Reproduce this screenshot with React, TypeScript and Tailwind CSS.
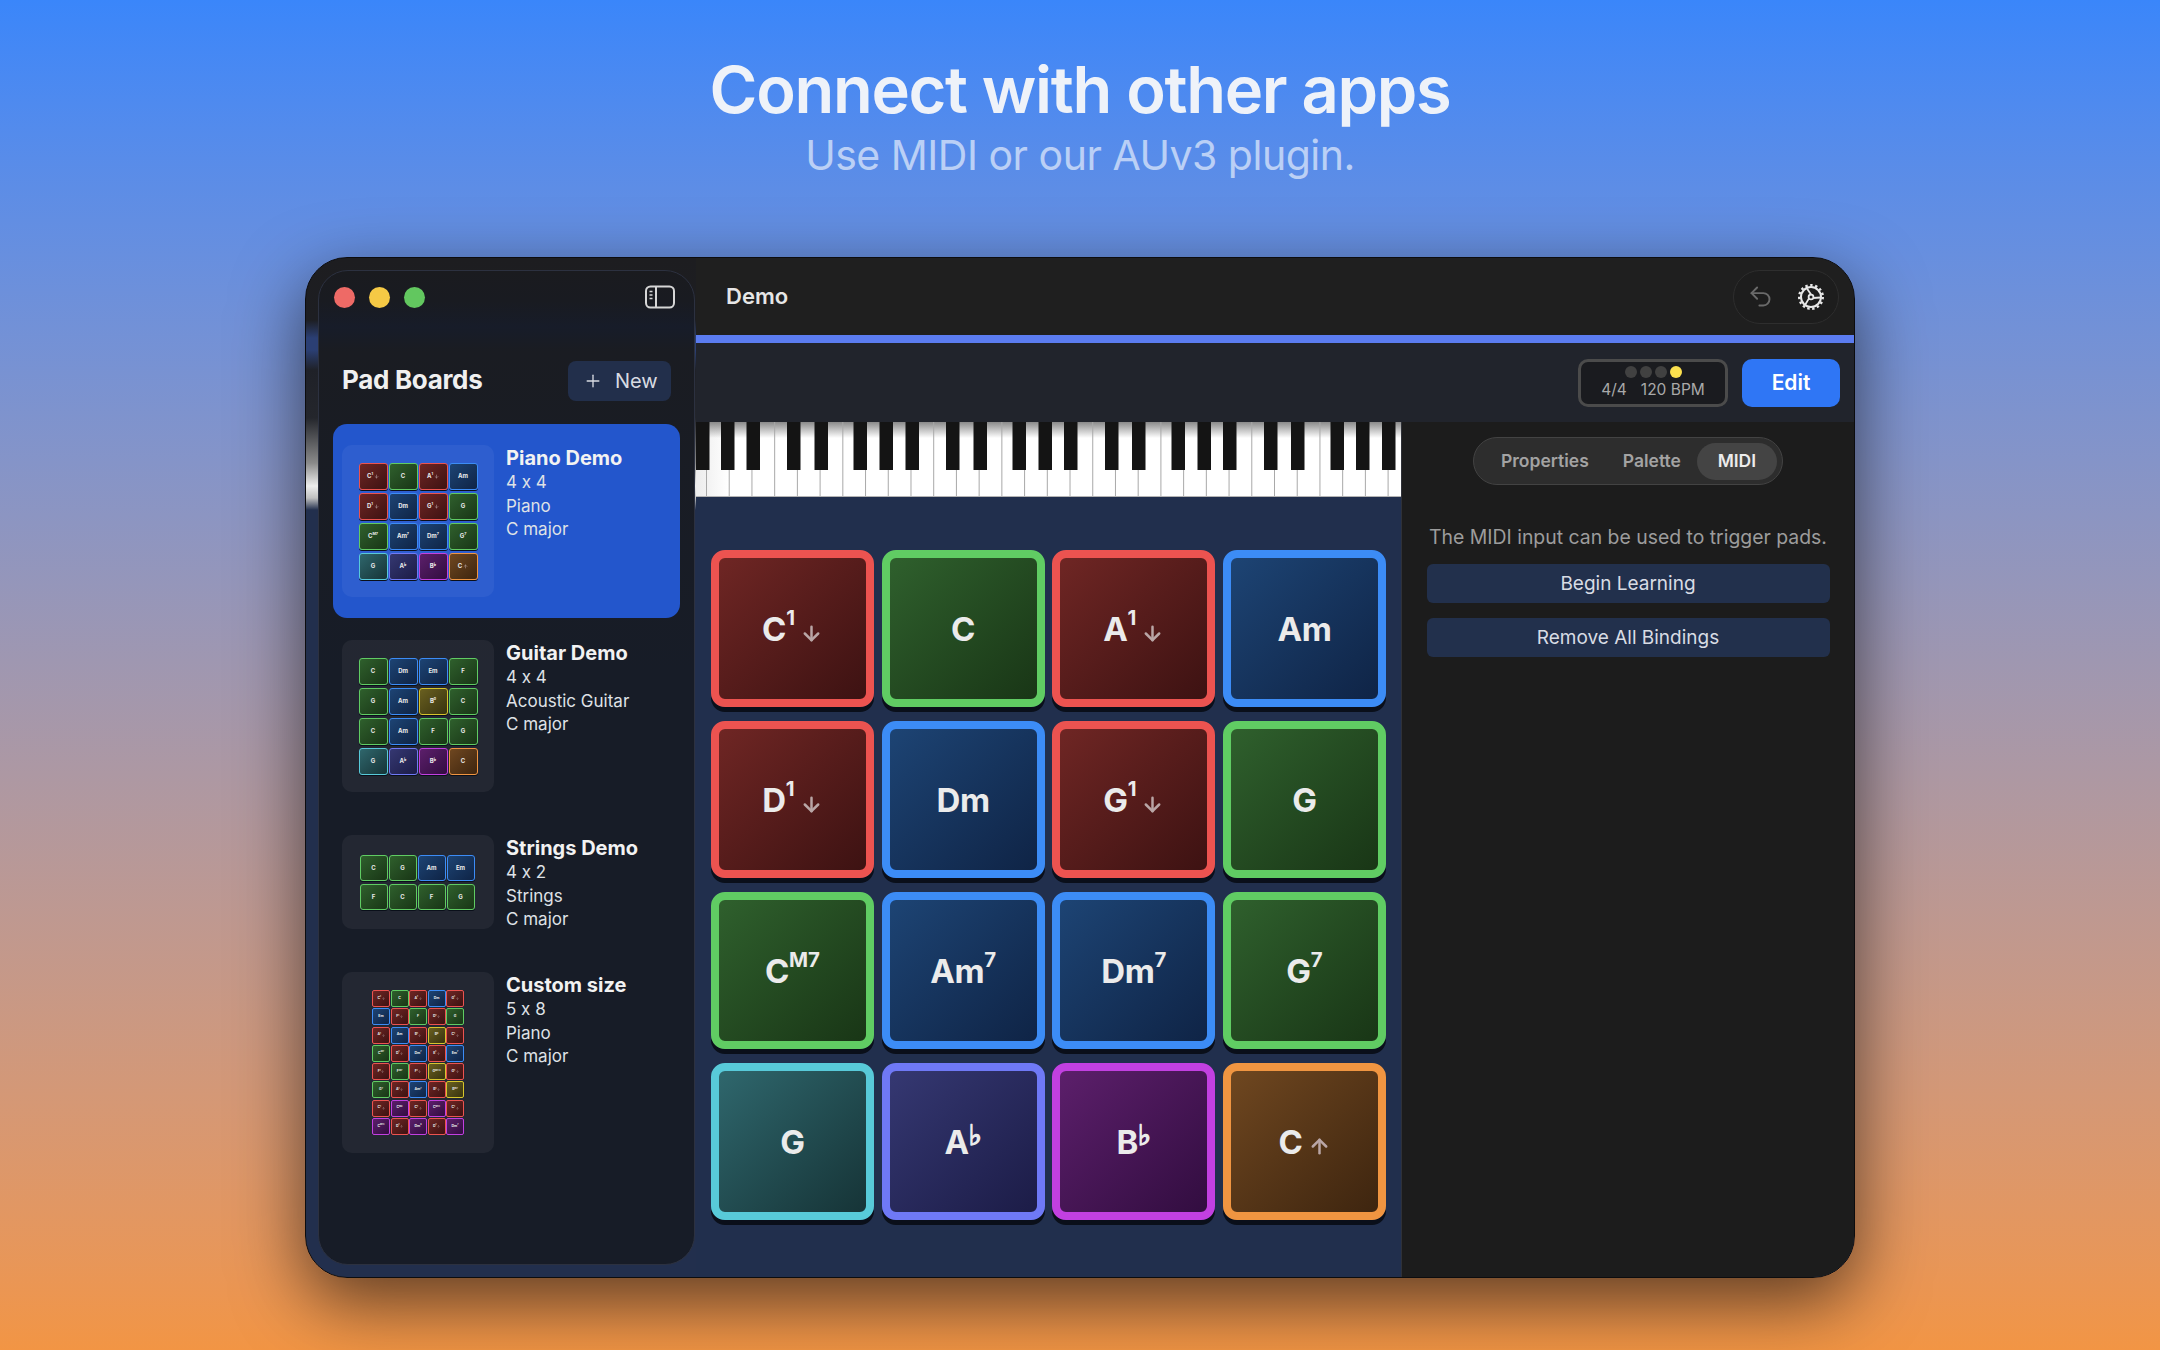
import React from "react";
import { ArrowDown, ArrowUp, Plus, Undo2 } from "lucide-react";

type C = "r" | "g" | "b" | "c" | "i" | "m" | "o" | "y";
type Size = "lg" | "md" | "sm";
type PadData = { c: C; t: string; s?: string; fl?: boolean; a?: "d" | "u" };

const colors: Record<C, string> = {
  r: "border-[#ec5350] bg-gradient-to-br from-[#6f2624] to-[#3d1212]",
  g: "border-[#60cc63] bg-gradient-to-br from-[#2f602d] to-[#193616]",
  b: "border-[#3c8cf6] bg-gradient-to-br from-[#1d4474] to-[#0f2446]",
  c: "border-[#58cad9] bg-gradient-to-br from-[#2f676d] to-[#163437]",
  i: "border-[#6f79f6] bg-gradient-to-br from-[#353872] to-[#1c1c47]",
  m: "border-[#c240e1] bg-gradient-to-br from-[#5c1f6b] to-[#320d40]",
  o: "border-[#f09541] bg-gradient-to-br from-[#6f4720] to-[#3e250f]",
  y: "border-[#d6c52c] bg-gradient-to-br from-[#6a6020] to-[#38330f]",
};

const sizes: Record<Size, string> = {
  lg: "border-[8px] rounded-[14px] text-[33px] font-bold shadow-[0_5px_0_#0a0f1a] pt-[2px]",
  md: "border-[1.5px] rounded-[3px] text-[6px] font-bold shadow-[0_1px_0_#0a0f1a]",
  sm: "border-[1px] rounded-[2px] text-[3.5px] font-bold",
};

const arrowSize: Record<Size, string> = {
  lg: "w-[23px] h-[23px] ml-[5px] mt-[7px]",
  md: "w-[5px] h-[5px] ml-[1px]",
  sm: "w-[3px] h-[3px] ml-[0.5px]",
};

function Pad({ p, size }: { p: PadData; size: Size }) {
  const Arrow = p.a === "u" ? ArrowUp : ArrowDown;
  return (
    <div className={`flex items-center justify-center leading-none text-[#ebebeb] ${sizes[size]} ${colors[p.c]}`}>
      <span className="tracking-[-0.01em]">{p.t}</span>
      {p.s && <span className="text-[0.62em] self-center -translate-y-[0.55em]">{p.s}</span>}
      {p.fl && <span className="text-[0.85em] -translate-y-[0.2em] font-bold font-['DejaVu_Sans',sans-serif] [-webkit-text-stroke:0.05em_#ebebeb]">♭</span>}
      {p.a && <Arrow strokeWidth={2.6} className={`text-[#b9a6a6] ${arrowSize[size]}`} />}
    </div>
  );
}

const main: PadData[] = [
  { c: "r", t: "C", s: "1", a: "d" }, { c: "g", t: "C" }, { c: "r", t: "A", s: "1", a: "d" }, { c: "b", t: "Am" },
  { c: "r", t: "D", s: "1", a: "d" }, { c: "b", t: "Dm" }, { c: "r", t: "G", s: "1", a: "d" }, { c: "g", t: "G" },
  { c: "g", t: "C", s: "M7" }, { c: "b", t: "Am", s: "7" }, { c: "b", t: "Dm", s: "7" }, { c: "g", t: "G", s: "7" },
  { c: "c", t: "G" }, { c: "i", t: "A", fl: true }, { c: "m", t: "B", fl: true }, { c: "o", t: "C", a: "u" },
];

const guitar: PadData[] = [
  { c: "g", t: "C" }, { c: "b", t: "Dm" }, { c: "b", t: "Em" }, { c: "g", t: "F" },
  { c: "g", t: "G" }, { c: "b", t: "Am" }, { c: "y", t: "B", s: "o" }, { c: "g", t: "C" },
  { c: "g", t: "C" }, { c: "b", t: "Am" }, { c: "g", t: "F" }, { c: "g", t: "G" },
  { c: "c", t: "G" }, { c: "i", t: "A", fl: true }, { c: "m", t: "B", fl: true }, { c: "o", t: "C" },
];

const strings: PadData[] = [
  { c: "g", t: "C" }, { c: "g", t: "G" }, { c: "b", t: "Am" }, { c: "b", t: "Em" },
  { c: "g", t: "F" }, { c: "g", t: "C" }, { c: "g", t: "F" }, { c: "g", t: "G" },
];

const custom: PadData[] = [
  { c: "r", t: "C", s: "1", a: "d" }, { c: "g", t: "C" }, { c: "r", t: "A", s: "1", a: "d" }, { c: "b", t: "Dm" }, { c: "r", t: "G", s: "1", a: "d" },
  { c: "b", t: "Em" }, { c: "r", t: "F", s: "1", a: "d" }, { c: "g", t: "F" }, { c: "r", t: "D", s: "1", a: "d" }, { c: "g", t: "G" },
  { c: "r", t: "A", s: "1", a: "d" }, { c: "b", t: "Am" }, { c: "r", t: "B", s: "1", a: "d" }, { c: "y", t: "B", s: "o" }, { c: "r", t: "C", s: "1", a: "d" },
  { c: "g", t: "C", s: "M7" }, { c: "r", t: "D", s: "1", a: "d" }, { c: "b", t: "Dm", s: "7" }, { c: "r", t: "E", s: "1", a: "d" }, { c: "b", t: "Em", s: "7" },
  { c: "r", t: "F", s: "1", a: "d" }, { c: "g", t: "F", s: "M7" }, { c: "r", t: "F", s: "1", a: "d" }, { c: "y", t: "G", s: "M7/9" }, { c: "r", t: "G", s: "1", a: "d" },
  { c: "g", t: "G", s: "7" }, { c: "r", t: "A", s: "1", a: "d" }, { c: "b", t: "Am", s: "7" }, { c: "r", t: "B", s: "1", a: "d" }, { c: "y", t: "B", s: "m7" },
  { c: "r", t: "C", s: "1", a: "u" }, { c: "m", t: "C", s: "M9" }, { c: "r", t: "C", s: "1", a: "u" }, { c: "m", t: "C", s: "M13" }, { c: "r", t: "C", s: "1", a: "u" },
  { c: "m", t: "C", s: "M13" }, { c: "r", t: "D", s: "1", a: "u" }, { c: "m", t: "Dm", s: "9" }, { c: "r", t: "D", s: "1", a: "u" }, { c: "m", t: "Dm", s: "7" },
];

const blackKeys = [0, 25, 50.5, 91, 118.5, 157.5, 183.5, 209.5, 250, 277.5, 316.5, 342.5, 368, 409, 436, 475.5, 501.5, 527, 568, 595, 634.5, 660, 686];
const whiteLines = Array.from({ length: 31 }, (_, i) => 10 + i * 22.72);

function Piano() {
  return (
    <svg width="705" height="75" viewBox="0 0 705 75" className="block shrink-0">
      <defs>
        <linearGradient id="shade" x1="0" y1="0" x2="0" y2="1">
          <stop offset="0" stopColor="#8a8a8a" />
          <stop offset="1" stopColor="#8a8a8a" stopOpacity="0" />
        </linearGradient>
        <linearGradient id="press" x1="0" y1="0" x2="1" y2="0">
          <stop offset="0" stopColor="#ececec" />
          <stop offset="1" stopColor="#ffffff" />
        </linearGradient>
      </defs>
      <rect width="705" height="75" fill="#ffffff" />
      <rect x="0" width="33" height="75" fill="url(#press)" />
      <rect width="705" height="16" fill="url(#shade)" />
      {whiteLines.map((x) => (
        <rect key={x} x={x} y="0" width="1" height="75" fill="#a9a9a9" />
      ))}
      <rect x="0" y="74" width="705" height="1" fill="#b4b4b4" />
      {blackKeys.map((x) => (
        <rect key={x} x={x} y="0" width="13.5" height="48" fill="#141414" />
      ))}
    </svg>
  );
}

function SidebarIcon() {
  return (
    <svg width="30" height="24" viewBox="0 0 30 24" fill="none" stroke="#d6d6d6" strokeWidth="2">
      <rect x="1" y="1.5" width="28" height="21" rx="4.5" />
      <path d="M11 1.5v21" />
      <path d="M4.5 6.5h3M4.5 10h3M4.5 13.5h3" strokeWidth="1.7" />
    </svg>
  );
}

function Gear() {
  return (
    <svg width="28" height="28" viewBox="0 0 28 28" fill="none" stroke="#e8e8e8">
      <circle cx="14" cy="14" r="10" strokeWidth="2" />
      <circle cx="14" cy="14" r="11.8" strokeWidth="2.4" strokeDasharray="2.4 2.55" />
      <circle cx="14" cy="14" r="2.4" strokeWidth="1.8" />
      <path d="M14 11.6 10 5.5M16.1 15 23.5 14.5M12 15.4 8 22" strokeWidth="1.8" />
    </svg>
  );
}

function Thumb({ pads, kind }: { pads: PadData[]; kind: "four" | "two" | "five" }) {
  const box = { four: "h-[152px]", two: "h-[94px] pr-[2px]", five: "h-[181px]" }[kind];
  const grid = {
    four: "grid-cols-[repeat(4,29px)] auto-rows-[27px] gap-x-px gap-y-[3px]",
    two: "grid-cols-[repeat(4,28px)] auto-rows-[26px] gap-x-px gap-y-[3px]",
    five: "grid-cols-[repeat(5,18px)] auto-rows-[17px] gap-x-[0.5px] gap-y-[1.3px]",
  }[kind];
  return (
    <div className={`w-[152px] shrink-0 rounded-[10px] bg-white/[0.05] flex items-center justify-center ${box}`}>
      <div className={`grid ${grid}`}>
        {pads.map((p, i) => (
          <Pad key={i} p={p} size={kind === "five" ? "sm" : "md"} />
        ))}
      </div>
    </div>
  );
}

function BoardCard({ name, lines, pads, kind, active }: { name: string; lines: string[]; pads: PadData[]; kind: "four" | "two" | "five"; active?: boolean }) {
  const height = { four: "h-[194px]", two: "h-[136px]", five: "h-[223px]" }[kind];
  return (
    <div className={`flex items-start gap-[12px] px-[9px] pt-[21px] rounded-[14px] ${height} ${active ? "bg-[#2356cc]" : ""}`}>
      <Thumb pads={pads} kind={kind} />
      <div className="pt-px">
        <div className="text-[20px] leading-[25px] font-bold text-[#f2f2f2]">{name}</div>
        {lines.map((l) => (
          <div key={l} className="text-[17px] leading-[23.5px] text-[#dfe1e6]">{l}</div>
        ))}
      </div>
    </div>
  );
}

export default function App() {
  return (
    <div className="w-[2160px] h-[1350px] overflow-hidden flex flex-col items-center bg-gradient-to-b from-[#3a86fa] to-[#f29544] font-['Inter',sans-serif] [font-feature-settings:'calt'_0]">
      <h1 className="mt-[54px] text-[65px] leading-[72px] font-semibold tracking-[-0.02em] text-[#eef2f9]">Connect with other apps</h1>
      <p className="mt-[3px] text-[41px] leading-[52px] tracking-[-0.012em] text-white/60">Use MIDI or our AUv3 plugin.</p>

      <div className="mt-[76px] w-[1550px] h-[1021px] shrink-0 flex overflow-hidden rounded-[42px] border border-[#0c0c0e] shadow-[0_24px_70px_rgba(0,0,0,0.6)] pl-[12px] bg-[linear-gradient(180deg,#1d1d20_0px,#1d1e22_62px,#2b3f74_80px,#2b3f74_92px,#1f2128_112px,#24262c_160px,#8a8a8a_205px,#ededed_228px,#c0c0c0_240px,#222f4d_252px,#222f4d_100%)]">
        <aside className="w-[377px] shrink-0 my-[12px] rounded-[30px] border border-[#2c3140] bg-[linear-gradient(180deg,#1a1b1f_0px,#191b21_30px,#171c29_56px,#1a1c22_80px,#171c27_400px)] flex flex-col overflow-hidden">
          <div className="h-[52px] flex items-center justify-between pl-[15px] pr-[19px] shrink-0">
            <div className="flex gap-[14px]">
              <div className="w-[21px] h-[21px] rounded-full bg-[#ee6a66]" />
              <div className="w-[21px] h-[21px] rounded-full bg-[#f5c945]" />
              <div className="w-[21px] h-[21px] rounded-full bg-[#62c75f]" />
            </div>
            <SidebarIcon />
          </div>
          <div className="mt-[37px] flex items-center justify-between pl-[23px] pr-[23px]">
            <div className="mb-[2px] text-[26px] font-bold tracking-[-0.012em] text-[#f0f0f0]">Pad Boards</div>
            <button className="w-[103px] h-[40px] rounded-[8px] bg-[#222f4b] flex items-center pl-[15px] gap-[12px] text-[20px] text-[#d8dbe2]">
              <Plus size={20} strokeWidth={1.6} />
              New
            </button>
          </div>
          <div className="mt-[23px] px-[14px] flex flex-col gap-px">
            <BoardCard active name="Piano Demo" lines={["4 x 4", "Piano", "C major"]} pads={main} kind="four" />
            <BoardCard name="Guitar Demo" lines={["4 x 4", "Acoustic Guitar", "C major"]} pads={guitar} kind="four" />
            <BoardCard name="Strings Demo" lines={["4 x 2", "Strings", "C major"]} pads={strings} kind="two" />
            <BoardCard name="Custom size" lines={["5 x 8", "Piano", "C major"]} pads={custom} kind="five" />
          </div>
        </aside>

        <div className="flex-1 min-w-0 flex flex-col ml-px">
          <header className="h-[77px] shrink-0 bg-[#1f1f1f] flex items-center justify-between pl-[30px] pr-[15px]">
            <div className="text-[22px] font-semibold text-[#e6e6e6]">Demo</div>
            <div className="w-[106px] h-[54px] rounded-full border border-[#2e2e2e] bg-[#1d1d1d] flex items-center justify-between pl-[13px] pr-[13px]">
              <Undo2 size={27} strokeWidth={1.7} className="text-[#6a6a6a]" />
              <Gear />
            </div>
          </header>
          <div className="h-[8px] shrink-0 bg-[#5b7cf0]" />
          <div className="h-[79px] shrink-0 bg-[#21242c] flex items-center justify-end gap-[14px] pr-[14px]">
            <div className="w-[150px] h-[48px] rounded-[10px] border-[3px] border-[#4b4b4b] bg-[#1a1b1f] flex flex-col items-center justify-center">
              <div className="flex gap-[3px] mb-[3px]">
                <div className="w-[12px] h-[12px] rounded-full bg-[#414141]" />
                <div className="w-[12px] h-[12px] rounded-full bg-[#414141]" />
                <div className="w-[12px] h-[12px] rounded-full bg-[#414141]" />
                <div className="w-[12px] h-[12px] rounded-full bg-[#fbe04e]" />
              </div>
              <div className="flex gap-[14px] text-[15.5px] leading-[18px] text-[#a9a9a9]">
                <span>4/4</span>
                <span>120 BPM</span>
              </div>
            </div>
            <button className="w-[98px] h-[48px] rounded-[10px] bg-[#2f76f5] text-[21px] font-semibold text-white">Edit</button>
          </div>

          <div className="flex-1 min-h-0 flex">
            <main className="w-[705px] shrink-0 bg-[#212f4d] flex flex-col">
              <Piano />
              <div className="pt-[53px] pl-[15px] grid grid-cols-[repeat(4,163px)] auto-rows-[157px] gap-x-[7.67px] gap-y-[14px]">
                {main.map((p, i) => (
                  <Pad key={i} p={p} size="lg" />
                ))}
              </div>
            </main>
            <section className="flex-1 min-w-0 bg-[#1c1c1c] border-l border-[#2f3138] flex flex-col items-center">
              <div className="mt-[15px] w-[310px] h-[48px] rounded-full bg-[#2d2d2d] border-[1.5px] border-[#434343] flex items-center text-[17.5px] font-semibold text-[#a3a3a3] pl-[27px] pr-[4px]">
                <span>Properties</span>
                <span className="ml-[34px]">Palette</span>
                <span className="ml-[16px] w-[80px] h-[37px] rounded-full bg-[#444444] text-[#ececec] flex items-center justify-center">MIDI</span>
              </div>
              <p className="mt-[40px] text-[19.4px] leading-[24px] text-[#9c9c9c] whitespace-nowrap">The MIDI input can be used to trigger pads.</p>
              <button className="mt-[15px] w-[403px] h-[39px] pt-[2px] rounded-[6px] bg-[#22304c] text-[19px] text-[#d8dce4]">Begin Learning</button>
              <button className="mt-[15px] w-[403px] h-[39px] pt-[2px] rounded-[6px] bg-[#22304c] text-[19px] text-[#d8dce4]">Remove All Bindings</button>
            </section>
          </div>
        </div>
      </div>
    </div>
  );
}
